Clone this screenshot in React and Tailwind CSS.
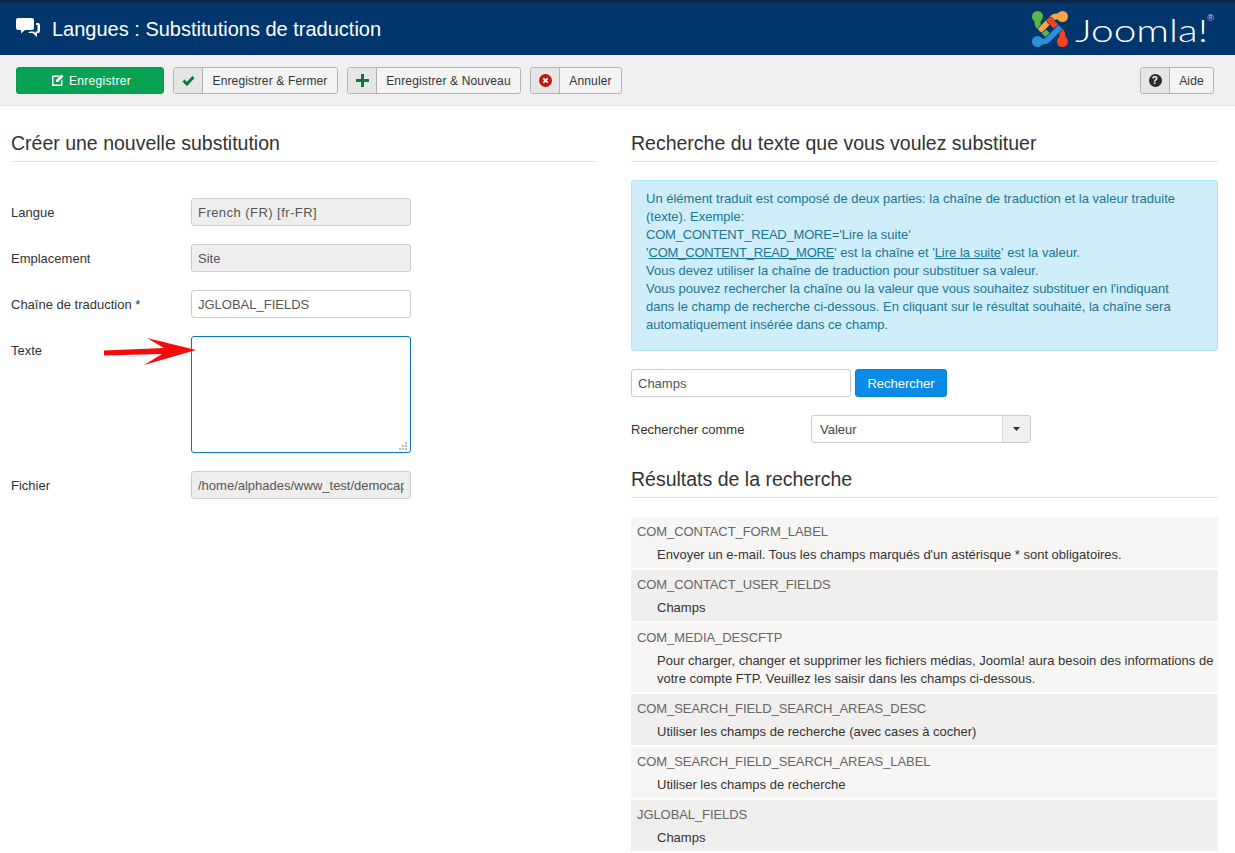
import React from "react";

const font = { fontFamily: '"Liberation Sans", Arial, sans-serif' };

function ToolBtn({ icon, label, labelW }) {
  return (
    <div className="flex h-[27px] rounded-[3px] border border-[#b3b3b3] bg-[#f4f4f4] text-[12px] tracking-[0.15px] text-[#333]">
      <div className="flex w-[29px] items-center justify-center rounded-l-[3px] border-r border-[#b3b3b3] bg-[#e6e6e6]">{icon}</div>
      <div className="flex items-center justify-center" style={{ width: labelW }}>{label}</div>
    </div>
  );
}

function Field({ label, children }) {
  return (
    <div className="flex">
      <div className="w-[180px] pt-[7px] text-[13px] leading-[16px] text-[#333]">{label}</div>
      {children}
    </div>
  );
}

function ReadOnly({ value, textClass = "" }) {
  return (
    <div className="h-[28px] w-[220px] rounded-[3px] border border-[#ccc] bg-[#eee] px-[6px] text-[13px] leading-[27px] text-[#555]">
      <div className={"overflow-hidden whitespace-nowrap " + textClass}>{value}</div>
    </div>
  );
}

function Heading({ children }) {
  return (
    <h3 className="h-[56px] border-b border-[#e5e5e5] pt-[25px] text-[19.5px] font-normal leading-[24px] text-[#333]">{children}</h3>
  );
}

const results = [
  ["COM_CONTACT_FORM_LABEL", "Envoyer un e-mail. Tous les champs marqués d'un astérisque * sont obligatoires.", 0],
  ["COM_CONTACT_USER_FIELDS", "Champs", 1],
  ["COM_MEDIA_DESCFTP", "Pour charger, changer et supprimer les fichiers médias, Joomla! aura besoin des informations de votre compte FTP. Veuillez les saisir dans les champs ci-dessous.", 0],
  ["COM_SEARCH_FIELD_SEARCH_AREAS_DESC", "Utiliser les champs de recherche (avec cases à cocher)", 1],
  ["COM_SEARCH_FIELD_SEARCH_AREAS_LABEL", "Utiliser les champs de recherche", 0],
  ["JGLOBAL_FIELDS", "Champs", 1],
];

const ARM = "M31 5.500 L24.500 5.500 C22.500 5.500 21.500 6 20.500 7 L9.500 18";

function JoomlaMark() {
  const arms = [
    [270, "#56b849"],
    [0, "#f9a541"],
    [90, "#f44321"],
    [180, "#2b8fd9"],
  ];
  return (
    <svg width="36" height="36" viewBox="0 0 36 36" fill="none" strokeLinecap="round">
      {arms.map(([r, c]) => (
        <g key={r} transform={`rotate(${r} 18 18)`}>
          <path d={ARM} stroke="#00366b" strokeWidth="7" />
          <path d={ARM} stroke={c} strokeWidth="6" />
          <circle cx="30.500" cy="5.500" r="5.500" fill={c} />
        </g>
      ))}
    </svg>
  );
}

export default function App() {
  return (
    <div className="relative h-[853px] w-[1235px] overflow-hidden bg-white" style={font}>
      <header className="flex h-[55px] items-center justify-between border-t-[3px] border-[#0b2747] bg-[#00366b] pl-[16px] pr-[21px]">
        <div className="flex items-center">
          <svg width="24" height="22" viewBox="0 0 24 22" className="mr-[12px] mt-[-3px]" fill="#fff">
            <path d="M2 1h14a2 2 0 0 1 2 2v8a2 2 0 0 1-2 2H9l-4 3.500V13H2a2 2 0 0 1-2-2V3a2 2 0 0 1 2-2z" />
            <path d="M20 6h2a2 2 0 0 1 2 2v6a2 2 0 0 1-2 2h-1v4l-4.500-4H12l2-1.500h3.500l2 1.700V14.500h2V8h-1.500z" />
          </svg>
          <h1 className="mt-[-1px] text-[20px] font-normal leading-[24px] text-white">Langues : Substitutions de traduction</h1>
        </div>
        <div className="flex items-center">
          <JoomlaMark />
          <div className="relative ml-[7px] h-[40px] w-[139px] overflow-visible">
            <span className="absolute left-0 top-[1px] origin-left scale-x-[1.31] whitespace-nowrap text-[31px] leading-[40px] text-white" style={{ fontFamily: "Lato, sans-serif", fontWeight: 300 }}>Joomla!</span>
            <span className="absolute right-0 top-[5px] text-[9px] leading-[9px] text-[#c9d6e2]">®</span>
          </div>
        </div>
      </header>

      <div className="flex h-[51px] items-start justify-between border-b border-[#e2e2e2] bg-[#f0f0f0] pl-[16px] pr-[21px] pt-[12px]">
        <div className="flex gap-[9px]">
          <div className="flex h-[27px] w-[148px] items-center justify-center gap-[5px] rounded-[3px] border border-[#0a9a4c] bg-[#07a353] pl-[2px] text-[12px] tracking-[0.3px] text-white">
            <svg width="13" height="13" viewBox="0 0 13 13" fill="#fff">
              <path d="M2 1.500h7L7.500 3H2.500v7.500H10V7l1.500-1.500V11a1 1 0 0 1-1 1H2a1 1 0 0 1-1-1V2.500a1 1 0 0 1 1-1z" />
              <path d="M10.500.500l2 2L7 8H5V6z" />
            </svg>
            Enregistrer
          </div>
          <ToolBtn label="Enregistrer & Fermer" labelW={134} icon={
            <svg width="13" height="11" viewBox="0 0 13 11"><path d="M1.500 5.500l3.500 3.500L11.500 2" fill="none" stroke="#0a7a3c" strokeWidth="3" /></svg>
          } />
          <ToolBtn label="Enregistrer & Nouveau" labelW={143} icon={
            <svg width="13" height="13" viewBox="0 0 13 13"><path d="M5 0h3v5h5v3H8v5H5V8H0V5h5z" fill="#0a7a3c" /></svg>
          } />
          <ToolBtn label="Annuler" labelW={61} icon={
            <svg width="13" height="13" viewBox="0 0 13 13"><circle cx="6.500" cy="6.500" r="6.500" fill="#c6170d" /><path d="M4.300 4.300l4.400 4.400M8.700 4.300l-4.400 4.400" stroke="#fff" strokeWidth="1.800" /></svg>
          } />
        </div>
        <ToolBtn label="Aide" labelW={43} icon={
          <span className="flex h-[13px] w-[13px] items-center justify-center rounded-full bg-[#2a2a2a] text-[10px] font-bold leading-none text-white">?</span>
        } />
      </div>

      <main className="flex gap-[34px] pl-[11px]">
        <section className="w-[586px] shrink-0">
          <Heading>Créer une nouvelle substitution</Heading>
          <div className="flex flex-col gap-[18px] pt-[36px]">
            <Field label="Langue"><ReadOnly value="French (FR) [fr-FR]" textClass="tracking-[0.45px]" /></Field>
            <Field label="Emplacement"><ReadOnly value="Site" /></Field>
            <Field label="Chaîne de traduction *">
              <div className="h-[28px] w-[220px] rounded-[3px] border border-[#ccc] bg-white pl-[6px] text-[13px] leading-[27px] text-[#555]">JGLOBAL_FIELDS</div>
            </Field>
            <Field label="Texte">
              <div className="relative h-[117px] w-[220px] rounded-[3px] border border-[#0a78b8] bg-white">
                <svg width="8" height="8" viewBox="0 0 8 8" className="absolute bottom-[2px] right-[3px]" fill="#bbb">
                  <rect x="6" y="0" width="2" height="2" /><rect x="3" y="3" width="2" height="2" /><rect x="6" y="3" width="2" height="2" />
                  <rect x="0" y="6" width="2" height="2" /><rect x="3" y="6" width="2" height="2" /><rect x="6" y="6" width="2" height="2" />
                </svg>
              </div>
            </Field>
            <Field label="Fichier"><ReadOnly value="/home/alphades/www_test/democapture" /></Field>
          </div>
        </section>

        <section className="w-[587px] shrink-0">
          <Heading>Recherche du texte que vous voulez substituer</Heading>
          <div className="mt-[18px] h-[171px] rounded-[3px] border border-[#aee6f5] bg-[#cfeefa] pl-[14px] pr-[18px] pt-[9px] text-[13px] leading-[18px] text-[#1b7595]">
            Un élément traduit est composé de deux parties: la chaîne de traduction et la valeur traduite (texte). Exemple:<br />
            <span className="tracking-[-0.2px]">COM_CONTENT_READ_MORE</span>='Lire la suite'<br />
            '<span className="underline tracking-[-0.2px]">COM_CONTENT_READ_MORE</span>' est la chaîne et '<span className="underline">Lire la suite</span>' est la valeur.<br />
            Vous devez utiliser la chaîne de traduction pour substituer sa valeur.<br />
            Vous pouvez rechercher la chaîne ou la valeur que vous souhaitez substituer en l'indiquant dans le champ de recherche ci-dessous. En cliquant sur le résultat souhaité, la chaîne sera automatiquement insérée dans ce champ.
          </div>
          <div className="mt-[18px] flex gap-[4px]">
            <div className="h-[28px] w-[220px] rounded-[3px] border border-[#ccc] bg-white pl-[6px] text-[13px] leading-[27px] text-[#555]">Champs</div>
            <div className="flex h-[28px] w-[92px] items-center justify-center rounded-[3px] border border-[#0782d6] bg-[#0a8ce6] pt-[1px] text-[13px] text-white">Rechercher</div>
          </div>
          <div className="mt-[18px] flex items-center">
            <div className="w-[180px] pt-[1px] text-[13px] text-[#333]">Rechercher comme</div>
            <div className="flex h-[28px] w-[220px] rounded-[3px] border border-[#ccc] bg-white text-[13px] text-[#444]">
              <div className="flex flex-1 items-center pl-[8px] pt-[1px]">Valeur</div>
              <div className="flex w-[28px] items-center justify-center rounded-r-[3px] border-l border-[#ddd] bg-[#f0f0f0]">
                <svg width="7" height="4" viewBox="0 0 7 4"><path d="M0 0h7L3.500 4z" fill="#333" /></svg>
              </div>
            </div>
          </div>
          <div className="mt-[-1px]">
            <Heading>Résultats de la recherche</Heading>
          </div>
          <div className="mt-[19px] flex flex-col gap-[2px]">
            {results.map(([key, val, alt]) => (
              <div key={key} className={"pb-[4px] pl-[6px] pr-[4px] pt-[6px] " + (alt ? "bg-[#f0efee]" : "bg-[#f7f6f5]")}>
                <div className="text-[13px] leading-[18px] tracking-[-0.08px] text-[#666]">{key}</div>
                <div className="mt-[5px] pl-[20px] text-[13px] leading-[18px] text-[#333]">{val}</div>
              </div>
            ))}
          </div>
        </section>
      </main>

      <svg width="94" height="30" viewBox="0 0 94 30" className="absolute left-[104px] top-[337px]">
        <path d="M0 13.500L60 11 43 1 92 13 40 28 58 17 0 18.500z" fill="#f60a0a" />
      </svg>
    </div>
  );
}
